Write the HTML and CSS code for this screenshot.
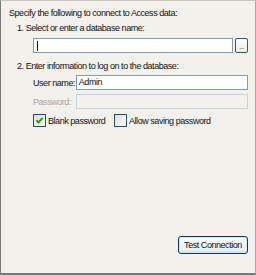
FILE: index.html
```html
<!DOCTYPE html>
<html>
<head>
<meta charset="utf-8">
<link rel="stylesheet" href="styles.css">
</head>
<body>
<div class="panel">
  <div class="line intro">Specify the following to connect to Access data:</div>
  <div class="line step step1">1. Select or enter a database name:</div>
  <div class="dbrow">
    <div class="field db"><span class="caret"></span></div>
    <div class="browse">...</div>
  </div>
  <div class="line step step2">2. Enter information to log on to the database:</div>
  <div class="formrow user">
    <span class="lbl">User name:</span>
    <div class="field wide">Admin</div>
  </div>
  <div class="formrow pw">
    <span class="lbl disabled">Password:</span>
    <div class="field wide off"></div>
  </div>
  <div class="checks">
    <label class="check first"><span class="box checked"><svg width="9" height="9" viewBox="0 0 9 9"><path d="M1.5 4.2 L3.5 6.4 L7.6 1.8" fill="none" stroke="#21a121" stroke-width="2"/></svg></span>Blank password</label>
    <label class="check"><span class="box"></span>Allow saving password</label>
  </div>
  <div class="footer">
    <div class="btn">Test Connection</div>
  </div>
</div>
</body>
</html>
```
FILE: styles.css
```css
html, body {
  margin: 0;
  padding: 0;
}
body {
  font-family: "Liberation Sans", Arial, sans-serif;
  font-size: 9px;
  letter-spacing: -0.45px;
  color: #111;
  background: #f2f0eb;
}
.panel {
  width: 256px;
  height: 275px;
  box-sizing: border-box;
  border-left: 1px solid #7a7a7a;
  border-top: 1px solid #c8c6c0;
  border-right: 1px solid #a8a8a8;
  border-bottom: 2px solid #7a7a7a;
  background: #f3f1ec;
  padding: 6px 7px 0 8px;
  display: flex;
  flex-direction: column;
}
.line {
  height: 13px;
  line-height: 13px;
  white-space: nowrap;
}
.step {
  padding-left: 8px;
}
.step1 { margin-top: 2px; }
.dbrow {
  display: flex;
  margin-top: 3px;
  padding-left: 24px;
  gap: 2px;
}
.field {
  box-sizing: border-box;
  height: 15px;
  border: 1px solid #7f9db9;
  background: #fff;
  line-height: 13px;
  padding-left: 2px;
}
.db {
  width: 200px;
}
.caret {
  display: block;
  width: 1px;
  height: 10px;
  background: #000;
  margin-top: 2px;
  margin-left: 1px;
}
.browse {
  box-sizing: border-box;
  width: 13px;
  height: 15px;
  border: 1px solid #2b5682;
  border-radius: 2px;
  background: linear-gradient(#fdfdfb, #ecebe4);
  font-size: 7px;
  line-height: 15px;
  text-align: center;
  color: #333;
  letter-spacing: -0.5px;
}
.step2 { margin-top: 7px; }
.formrow {
  display: flex;
  align-items: center;
  padding-left: 24px;
}
.user { margin-top: 2px; }
.pw { margin-top: 4px; }
.lbl {
  width: 43px;
  white-space: nowrap;
}
.disabled { color: #a7a69d; }
.wide { width: 173px; }
.off {
  background: #f3f1ec;
  border-color: #c9d3dc;
}
.checks {
  display: flex;
  padding-left: 24px;
  margin-top: 5px;
}
.check {
  display: flex;
  align-items: center;
  gap: 2px;
  height: 13px;
  white-space: nowrap;
}
.first { width: 81px; }
.box {
  box-sizing: border-box;
  width: 13px;
  height: 13px;
  border: 1px solid #1c5180;
  background: linear-gradient(135deg, #dcdcd7, #ffffff);
  display: flex;
  align-items: center;
  justify-content: center;
}
.footer {
  margin-top: auto;
  display: flex;
  justify-content: flex-end;
  padding-bottom: 19px;
}
.btn {
  box-sizing: border-box;
  width: 70px;
  height: 18px;
  border: 1px solid #003c74;
  border-radius: 3px;
  background: linear-gradient(#ffffff, #ecebe6 85%, #d6d0c5);
  box-shadow: inset 0 0 0 1px #cee7ff;
  text-align: center;
  line-height: 16px;
  white-space: nowrap;
}
```
